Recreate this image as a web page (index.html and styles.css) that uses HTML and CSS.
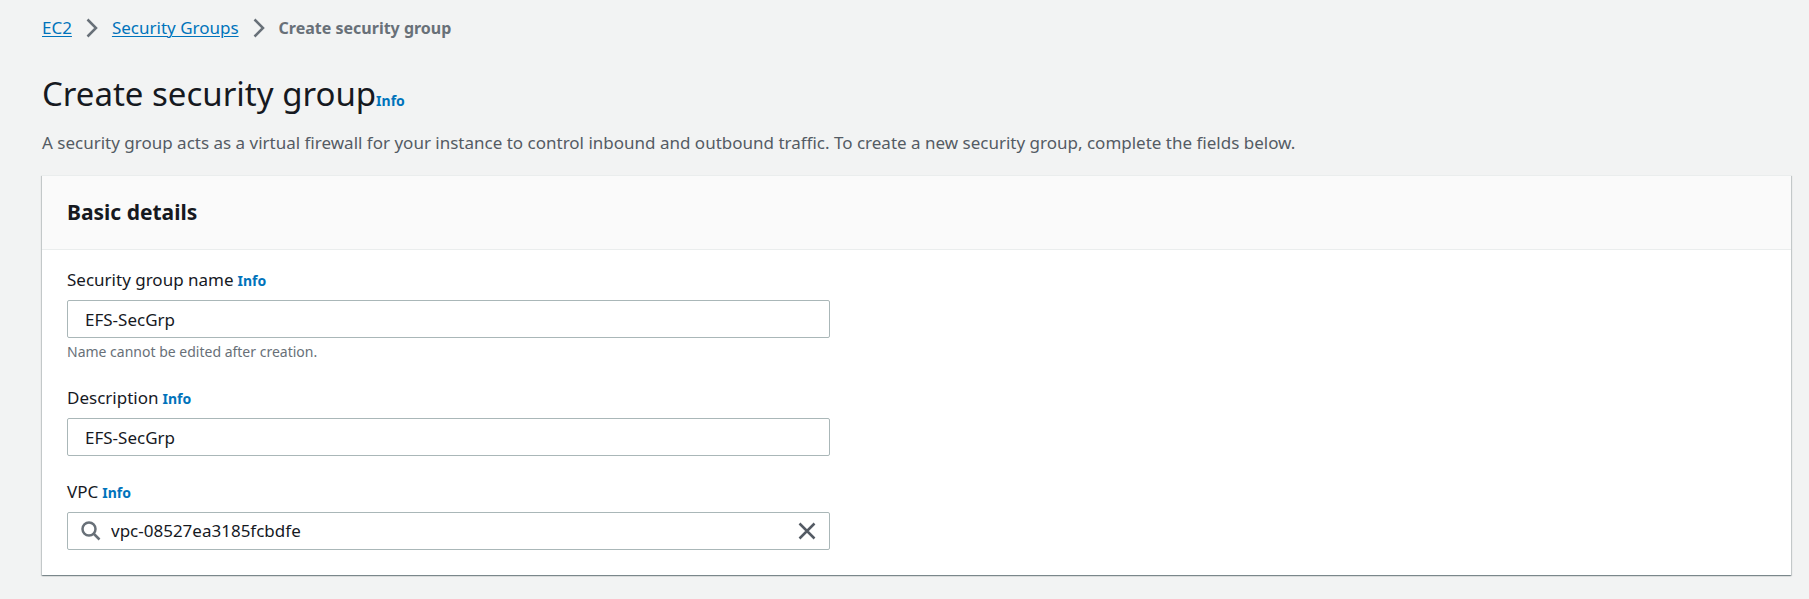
FILE: index.html
```html
<!DOCTYPE html>
<html lang="en">
<head>
<meta charset="utf-8">
<meta name="viewport" content="width=device-width, initial-scale=1">
<title>Create security group</title>
<link rel="stylesheet" href="styles.css">
</head>
<body>
<main class="page">
  <nav class="breadcrumbs" aria-label="Breadcrumbs">
    <a href="#">EC2</a>
    <svg class="chevron" viewBox="0 0 12 20" aria-hidden="true"><path d="M1.500 1.500 10 10l-8.500 8.500"/></svg>
    <a href="#">Security Groups</a>
    <svg class="chevron" viewBox="0 0 12 20" aria-hidden="true"><path d="M1.500 1.500 10 10l-8.500 8.500"/></svg>
    <span class="current" aria-current="page">Create security group</span>
  </nav>
  <header class="heading">
    <h1>Create security group</h1><a class="info" href="#">Info</a>
  </header>
  <p class="intro">A security group acts as a virtual firewall for your instance to control inbound and outbound traffic. To create a new security group, complete the fields below.</p>
  <section class="card">
    <h2 class="card-title">Basic details</h2>
    <form class="fields">
      <div class="field">
        <div class="label-row"><label for="name">Security group name</label><a class="info" href="#">Info</a></div>
        <input class="box" id="name" type="text" value="EFS-SecGrp">
        <p class="hint">Name cannot be edited after creation.</p>
      </div>
      <div class="field">
        <div class="label-row"><label for="description">Description</label><a class="info" href="#">Info</a></div>
        <input class="box" id="description" type="text" value="EFS-SecGrp">
      </div>
      <div class="field">
        <div class="label-row"><label for="vpc">VPC</label><a class="info" href="#">Info</a></div>
        <div class="box search">
          <svg class="search-icon" viewBox="0 0 20 20" aria-hidden="true"><circle cx="8" cy="8" r="6.500"/><path d="m12.500 12.500 6 6"/></svg>
          <input class="search-input" id="vpc" type="text" value="vpc-08527ea3185fcbdfe">
          <button class="clear" type="button" aria-label="Clear"><svg viewBox="0 0 18 18" aria-hidden="true"><path d="m1.500 1.500 15 15m0-15-15 15"/></svg></button>
        </div>
      </div>
    </form>
  </section>
</main>
</body>
</html>
```
FILE: styles.css
```css
* { box-sizing: border-box; }
body {
  margin: 0;
  background: #f2f3f3;
  color: #16191f;
  font: 17px/24px "Noto Sans", "Open Sans", sans-serif;
}
.page { padding: 16px 18px 24px 42px; }
h1, h2, p { margin: 0; }
a { color: #0073bb; }
.breadcrumbs { display: flex; align-items: center; gap: 14px; }
.breadcrumbs a { text-underline-offset: 2px; text-decoration-thickness: 1px; }
.chevron { width: 12px; height: 20px; fill: none; stroke: #687078; stroke-width: 2.5; }
.current { color: #687078; font-size: 16px; font-weight: 700; }
.heading { display: flex; align-items: baseline; margin-top: 32px; }
h1 { font-size: 33px; line-height: 44px; font-weight: 400; }
.info { font-size: 14px; font-weight: 700; text-decoration: none; }
.intro { margin-top: 15px; color: #545b64; }
.card {
  margin-top: 20px;
  background: #fff;
  border-top: 1px solid #eaeded;
  box-shadow: 0 1px 1px 0 rgba(0, 28, 36, .3), 1px 1px 1px 0 rgba(0, 28, 36, .15), -1px 1px 1px 0 rgba(0, 28, 36, .15);
}
.card-title {
  padding: 22px 25px 23px;
  background: #fafafa;
  border-bottom: 1px solid #eaeded;
  font-size: 21px;
  line-height: 28px;
  font-weight: 700;
}
.fields { display: flex; flex-direction: column; gap: 24px; padding: 18px 25px 25px; }
.field { width: calc(45% - 2px); }
.label-row { display: flex; align-items: baseline; gap: 4px; height: 24px; margin-bottom: 8px; }
.box {
  display: block;
  width: 100%;
  height: 38px;
  padding: 0 17px;
  border: 1px solid #aab7b8;
  border-radius: 2px;
  background: #fff;
  color: #16191f;
  font: inherit;
}
.hint { margin-top: 4px; color: #687078; font-size: 14px; line-height: 20px; }
.search { display: flex; align-items: center; gap: 10px; padding: 0 13px; }
.search-icon { width: 20px; height: 20px; fill: none; stroke: #687078; stroke-width: 2.5; }
.search-input { flex: 1; min-width: 0; padding: 0; border: 0; background: none; color: inherit; font: inherit; outline: 0; }
.clear { display: flex; padding: 0; border: 0; background: none; }
.clear svg { width: 18px; height: 18px; fill: none; stroke: #545b64; stroke-width: 2.5; }
```
